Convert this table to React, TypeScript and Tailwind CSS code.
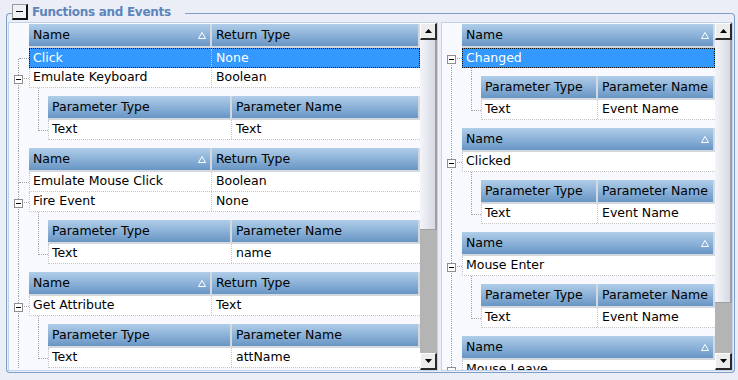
import { Fragment, type ReactNode } from "react";

type Row = { name: string; ret?: string; selected?: boolean; open?: boolean; params?: [string, string] };

const leftGroups: Row[][] = [
  [
    { name: "Click", ret: "None", selected: true },
    { name: "Emulate Keyboard", ret: "Boolean", open: true, params: ["Text", "Text"] },
  ],
  [
    { name: "Emulate Mouse Click", ret: "Boolean" },
    { name: "Fire Event", ret: "None", open: true, params: ["Text", "name"] },
  ],
  [{ name: "Get Attribute", ret: "Text", open: true, params: ["Text", "attName"] }],
];

// the last event is cut by the panel edge, its parameters lie below it
const rightGroups: Row[][] = [
  [{ name: "Changed", selected: true, open: true, params: ["Text", "Event Name"] }],
  [{ name: "Clicked", open: true, params: ["Text", "Event Name"] }],
  [{ name: "Mouse Enter", open: true, params: ["Text", "Event Name"] }],
  [{ name: "Mouse Leave", open: true }],
];

const LINE = "border-dotted border-[#a4a4a4]";

function SortMark() {
  return (
    <svg width="8" height="7" viewBox="0 0 8 7" className="shrink-0">
      <path d="M4 0.5 L7.5 6.5 L0.5 6.5 Z" fill="none" stroke="#fff" strokeWidth="1" />
    </svg>
  );
}

function HeaderCell({ children, className = "", sort }: { children: ReactNode; className?: string; sort?: boolean }) {
  return (
    <div
      className={`flex h-full items-center justify-between border-b-2 border-r-2 border-[#d4d9e0] bg-linear-to-b from-[#b0cde8] via-[#8cb2d8] to-[#6895c4] px-[4px] pt-px ${className}`}
    >
      <span className="whitespace-nowrap">{children}</span>
      {sort && <SortMark />}
    </div>
  );
}

function Gutter({
  w,
  top = true,
  bottom = true,
  branch = false,
  box = false,
}: {
  w: string;
  top?: boolean;
  bottom?: boolean;
  branch?: boolean;
  box?: boolean;
}) {
  return (
    <div className={`relative grid shrink-0 grid-cols-[10px_1fr] grid-rows-[11px_1fr] ${w}`}>
      <div className={top ? `border-r ${LINE}` : ""} />
      <div className={branch ? `border-b ${LINE}` : ""} />
      <div className={bottom ? `border-r ${LINE}` : ""} />
      <div />
      {box && (
        <div className="absolute left-[5px] top-[7px] flex size-[9px] items-center justify-center border border-[#8e8e8e] bg-white">
          <div className="h-px w-[5px] bg-black" />
        </div>
      )}
    </div>
  );
}

function DataRow({ cells, widths, selected }: { cells: string[]; widths: string[]; selected?: boolean }) {
  return (
    <div
      className={`flex h-5 flex-1 ${
        selected
          ? "border border-dotted border-[#111] bg-[#3399ff] text-white"
          : "border-b border-l border-dotted border-[#c4c4c4] bg-white"
      }`}
    >
      {cells.map((c, i) => (
        <div
          key={i}
          className={`flex items-center whitespace-nowrap ${i === 0 ? "pl-[3px]" : "pl-[4px]"} ${widths[i]} ${
            i < cells.length - 1 ? `border-r border-dotted ${selected ? "border-[#a9d2fb]" : "border-[#c4c4c4]"}` : ""
          }`}
        >
          {c}
        </div>
      ))}
    </div>
  );
}

function Nested({ params, headW, cellW }: { params: [string, string]; headW: string; cellW: string }) {
  return (
    <div className="flex shrink-0">
      <Gutter w="w-[20px]" />
      <div className="flex flex-1 flex-col">
        <div className="flex h-[32px]">
          <Gutter w="w-[19px]" />
          <div className="flex flex-1 pt-[8px]">
            <HeaderCell className={headW}>Parameter Type</HeaderCell>
            <HeaderCell className="flex-1">Parameter Name</HeaderCell>
          </div>
        </div>
        <div className="flex h-5">
          <Gutter w="w-[19px]" bottom={false} branch />
          <DataRow cells={params} widths={[cellW, "flex-1"]} />
        </div>
      </div>
    </div>
  );
}

function Tree({ groups, withReturn, headW, cellW }: { groups: Row[][]; withReturn: boolean; headW: string; cellW: string }) {
  return (
    <div className="flex flex-1 flex-col overflow-hidden bg-[#f7f9fe] pt-[1px]">
      {groups.map((g, gi) => (
        <Fragment key={gi}>
          <div className={`flex shrink-0 ${gi ? "h-[32px]" : "h-6"}`}>
            <Gutter w="w-[20px]" top={gi > 0} bottom={gi > 0} />
            <div className={`flex flex-1 ${gi ? "pt-[8px]" : ""}`}>
              {withReturn ? (
                <>
                  <HeaderCell className="w-[183px]" sort>
                    Name
                  </HeaderCell>
                  <HeaderCell className="flex-1">Return Type</HeaderCell>
                </>
              ) : (
                <HeaderCell className="flex-1" sort>
                  Name
                </HeaderCell>
              )}
            </div>
          </div>
          {g.map((r, ri) => (
            <Fragment key={ri}>
              <div className="flex h-5 shrink-0">
                <Gutter w="w-[20px]" top={gi > 0 || ri > 0} branch box={!!r.open} />
                <DataRow
                  cells={withReturn ? [r.name, r.ret ?? ""] : [r.name]}
                  widths={withReturn ? ["w-[182px]", "flex-1"] : ["flex-1"]}
                  selected={r.selected}
                />
              </div>
              {r.params && <Nested params={r.params} headW={headW} cellW={cellW} />}
            </Fragment>
          ))}
        </Fragment>
      ))}
    </div>
  );
}

function Arrow({ up }: { up?: boolean }) {
  return (
    <div className="flex h-[17px] shrink-0 items-center justify-center border-b-2 border-l border-r-2 border-t border-white border-b-[#2a2a2a] border-r-[#2a2a2a] bg-[#ececec]">
      <svg width="7" height="4" viewBox="0 0 7 4">
        <path d={up ? "M3.5 0 L7 4 L0 4 Z" : "M0 0 L7 0 L3.5 4 Z"} fill="#000" />
      </svg>
    </div>
  );
}

function ScrollBar({ thumb }: { thumb: string }) {
  return (
    <div className="flex w-[17px] shrink-0 flex-col bg-[#b4b4b4]">
      <Arrow up />
      <div className={`${thumb} shrink-0 border-b border-r-2 border-[#a0a0a0] bg-linear-to-r from-[#f4f5f9] to-[#d6dae5]`} />
      <div className="flex-1" />
      <Arrow />
    </div>
  );
}

export default function App() {
  return (
    <div className="h-[380px] w-[738px] overflow-hidden bg-[#eceef7] font-['DejaVu_Sans',sans-serif] text-[12.5px] text-black">
      <div className="flex h-[22px]">
        <div className="ml-[6px] mt-[13px] w-[6px] rounded-tl-[4px] border-l border-t border-[#7f9ec7]" />
        <div className="mt-[4px] flex h-[16px] w-[16px] items-center justify-center border-b-2 border-l border-r-2 border-t border-[#999] border-b-[#111] border-r-[#111] bg-[#f0f1f7]">
          <div className="h-px w-[7px] bg-black" />
        </div>
        <div className="ml-[4px] flex items-center pt-px text-[12px] font-bold tracking-[-0.3px] text-[#5b85bb]">
          Functions and Events
        </div>
        <div className="ml-[14px] mr-[3px] mt-[13px] flex-1 rounded-tr-[4px] border-r border-t border-[#7f9ec7]" />
      </div>
      <div className="ml-[6px] mr-[3px] flex h-[351px] gap-[3px] rounded-b-[4px] border-x border-b border-[#7f9ec7] pl-[1px]">
        <div className="flex h-[349px] w-[430px] border border-[#c3d2e8]">
          <Tree groups={leftGroups} withReturn headW="w-[184px]" cellW="w-[183px]" />
          <ScrollBar thumb="h-[190px]" />
        </div>
        <div className="flex h-[349px] w-[292px] border border-[#c3d2e8]">
          <Tree groups={rightGroups} withReturn={false} headW="w-[117px]" cellW="w-[116px]" />
          <ScrollBar thumb="h-[263px]" />
        </div>
      </div>
    </div>
  );
}
